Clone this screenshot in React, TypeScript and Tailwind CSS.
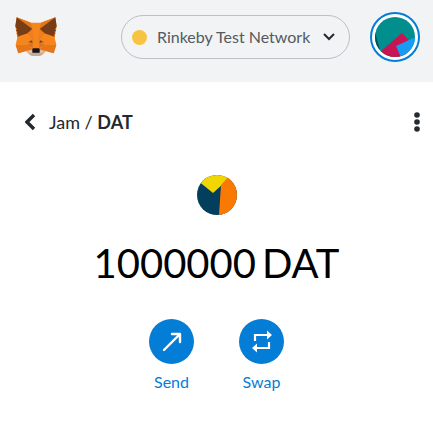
import { useState } from "react";

const NETWORKS = ["Rinkeby Test Network", "Ethereum Mainnet", "Ropsten Test Network"];

function FoxLogo() {
  return (
    <svg viewBox="0 0 126 120" className="h-10 w-[42px]" aria-hidden="true">
      <path fill="#f6851b" d="M5 1 48 17H78L121 1 125 28 119 62 124 83 116 109 93 102 80 115H46L33 102 10 109 2 83 7 62 1 28Z" />
      <path fill="#e2761b" d="M5 1 48 17 52 37ZM121 1 78 17 74 37Z" />
      <path fill="#763d16" d="M5 1 52 36 38 49 7 59 9 53 5 49 8 45 3 41 6 37 1 28Z" />
      <path fill="#763d16" d="M121 1 74 36 88 49 119 59 117 53 121 49 118 45 123 41 120 37 125 28Z" />
      <path fill="#e4761b" d="M2 84 10 109 33 102 34 84ZM124 84 116 109 93 102 92 84Z" />
      <path fill="#ee7d20" d="M38 49 52 36 57 76ZM88 49 74 36 69 76Z" />
      <path fill="#dd701a" d="M34 84 52 78 54 92ZM92 84 74 78 72 92Z" />
      <path fill="#e4751f" d="M33 102 34 84 52 96ZM93 102 92 84 74 96Z" />
      <path fill="#b5622a" d="M38 76 51 68 54 79ZM88 76 75 68 72 79Z" />
      <path fill="#4c4a4d" d="M43 74 50 71 52 77ZM83 74 76 71 74 77Z" />
      <path fill="#d7c1b3" d="M35 102 52 98 54 108H72L74 98 91 102 83 109 75 117H51L43 109Z" />
      <path fill="#c0ad9e" d="M43 109 54 107H72L83 109 75 117H51Z" />
      <path fill="#161616" d="M52 96 54 94H72L74 96V107H52Z" />
    </svg>
  );
}

function AccountAvatar() {
  return (
    <svg viewBox="0 0 50 50" className="size-[50px]" aria-hidden="true">
      <circle cx="25" cy="25" r="24" fill="#fff" stroke="#037dd6" strokeWidth="2" />
      <clipPath id="account">
        <circle cx="25" cy="25" r="20" />
      </clipPath>
      <g clipPath="url(#account)">
        <path fill="#018e8c" d="M0 0H50V50H0Z" />
        <path fill="#034f5d" d="M5 20 11 42 0 40Z" />
        <path fill="#c81450" d="M9 41 32 21 42 32 32 50H15Z" />
        <path fill="#189bf2" d="M26 34 50 23V50H33Z" />
      </g>
    </svg>
  );
}

function TokenIcon() {
  return (
    <svg viewBox="0 0 40 40" className="size-10" aria-hidden="true">
      <clipPath id="token">
        <circle cx="20" cy="20" r="20" />
      </clipPath>
      <g clipPath="url(#token)">
        <path fill="#033f5d" d="M0 0H40V40H0Z" />
        <path fill="#f2d602" d="M0 5V0H36L16 18Z" />
        <path fill="#fa7900" d="M31 2 24 10 22 40H40V2Z" />
      </g>
    </svg>
  );
}

function SendIcon() {
  return (
    <svg viewBox="0 0 45 45" className="size-full" fill="none" stroke="#fff" strokeWidth="2.4" strokeLinecap="round" strokeLinejoin="round" aria-hidden="true">
      <path d="M15 31 31 15M23 15H31V23" />
    </svg>
  );
}

function SwapIcon() {
  return (
    <svg viewBox="0 0 45 45" className="size-full" aria-hidden="true">
      <path fill="none" stroke="#fff" strokeWidth="2.2" d="M16 22V16H28M30 23V29H18" />
      <path fill="#fff" d="M28 11.5 33 16 28 20.5ZM18 24.5 13 29 18 33.5Z" />
    </svg>
  );
}

export default function App() {
  const [network, setNetwork] = useState(NETWORKS[0]);

  return (
    <div className="min-h-screen bg-white font-['Lato','Liberation_Sans',sans-serif] text-[#24292e]">
      <header className="flex items-center bg-[#f2f3f4] px-[13px] pt-3 pb-5">
        <a href="#home" aria-label="Home" className="ml-0.5">
          <FoxLogo />
        </a>
        <label className="ml-auto flex h-11 items-center rounded-full border border-[#bbc0c5] px-2.5 text-[#535a61]">
          <span className="mr-2.5 size-[15px] rounded-full bg-[#f6c343]" />
          <select
            aria-label="Network"
            value={network}
            onChange={(e) => setNetwork(e.target.value)}
            className="appearance-none bg-transparent text-base outline-none"
          >
            {NETWORKS.map((name) => (
              <option key={name}>{name}</option>
            ))}
          </select>
          <svg viewBox="0 0 12 8" className="mr-1 ml-2.5 h-2 w-3" fill="none" stroke="#24292e" strokeWidth="2" aria-hidden="true">
            <path d="M1 1 6 6 11 1" />
          </svg>
        </label>
        <button aria-label="Account" className="ml-5 rounded-full">
          <AccountAvatar />
        </button>
      </header>

      <main>
        <nav className="flex items-center justify-between px-[13px] pt-6">
          <a href="#assets" className="flex h-8 items-center pl-3 text-lg">
            <svg viewBox="0 0 12 18" className="mr-3 h-[18px] w-3" fill="none" stroke="#24292e" strokeWidth="3.4" aria-hidden="true">
              <path d="M9 2 2 9 9 16" />
            </svg>
            <span>
              Jam / <b>DAT</b>
            </span>
          </a>
          <button aria-label="Asset options" className="h-8">
            <svg viewBox="0 0 6 20" className="h-5 w-1.5" fill="#24292e" aria-hidden="true">
              <circle cx="3" cy="3" r="2.8" />
              <circle cx="3" cy="10" r="2.8" />
              <circle cx="3" cy="17" r="2.8" />
            </svg>
          </button>
        </nav>

        <section className="flex flex-col items-center pt-[37px]">
          <TokenIcon />
          <h1 className="mt-6 flex gap-1.5 text-[40px] leading-12 text-black">
            <span>1000000</span>
            <span>DAT</span>
          </h1>
          <div className="mt-8 flex gap-[45px] text-base text-[#037dd6]">
            <button className="flex w-[45px] flex-col items-center gap-1.5">
              <span className="size-[45px] rounded-full bg-[#037dd6]">
                <SendIcon />
              </span>
              Send
            </button>
            <button className="flex w-[45px] flex-col items-center gap-1.5">
              <span className="size-[45px] rounded-full bg-[#037dd6]">
                <SwapIcon />
              </span>
              Swap
            </button>
          </div>
        </section>
      </main>
    </div>
  );
}
